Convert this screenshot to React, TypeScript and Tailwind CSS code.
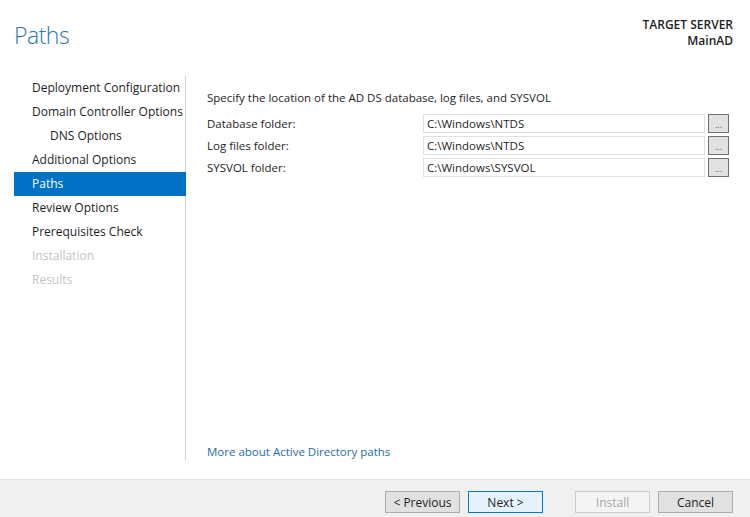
import React from 'react'

const navItems = [
  { label: 'Deployment Configuration', state: 'done' },
  { label: 'Domain Controller Options', state: 'done' },
  { label: 'DNS Options', state: 'done', indent: true },
  { label: 'Additional Options', state: 'done' },
  { label: 'Paths', state: 'active' },
  { label: 'Review Options', state: 'done' },
  { label: 'Prerequisites Check', state: 'done' },
  { label: 'Installation', state: 'disabled' },
  { label: 'Results', state: 'disabled' },
]

const folders = [
  { label: 'Database folder:', value: 'C:\\Windows\\NTDS' },
  { label: 'Log files folder:', value: 'C:\\Windows\\NTDS' },
  { label: 'SYSVOL folder:', value: 'C:\\Windows\\SYSVOL' },
]

export default function App() {
  return (
    <div
      className="flex h-[517px] w-[750px] flex-col overflow-hidden bg-white text-[12px] text-[#1e1e1e]"
      style={{ fontFamily: '"Open Sans", "Noto Sans", sans-serif' }}
    >
      {/* Header */}
      <div className="flex h-[76px] shrink-0 justify-between">
        <div className="pl-[14px] pt-[17px] text-[23px] font-light leading-[36px] tracking-[-0.5px] text-[#2a78ad]">
          Paths
        </div>
        <div className="pr-[17px] pt-[17px] text-right text-[12px] font-semibold leading-[16px] text-[#1e1e1e]">
          <div>TARGET SERVER</div>
          <div>MainAD</div>
        </div>
      </div>

      {/* Body */}
      <div className="flex flex-1">
        <div className="mb-[19px] ml-[14px] w-[172px] border-r border-[#d4d4d4]">
          {navItems.map((item) => (
            <div
              key={item.label}
              className={`flex h-[24px] items-center whitespace-nowrap ${
                item.indent ? 'pl-[36px]' : 'pl-[18px]'
              } ${
                item.state === 'active'
                  ? 'mr-[-1px] bg-[#0072c6] text-white'
                  : item.state === 'disabled'
                    ? 'text-[#c4c4c4]'
                    : 'text-[#1e1e1e]'
              }`}
            >
              {item.label}
            </div>
          ))}
        </div>

        <div className="flex flex-1 flex-col pb-[19px] pl-[21px] pr-[21px] pt-[13px] text-[11.5px]">
          <div className="leading-[18px]">
            Specify the location of the AD DS database, log files, and SYSVOL
          </div>
          <div className="mt-[7px] flex flex-col gap-[3px]">
            {folders.map((f) => (
              <div key={f.label} className="flex h-[19px] items-center">
                <div className="w-[216px]">{f.label}</div>
                <div className="flex h-[19px] w-[282px] items-center border border-[#e0e0e0] bg-white pl-[3px]">
                  {f.value}
                </div>
                <button className="ml-[3px] flex h-[19px] w-[21px] items-end justify-center border border-[#707070] bg-[#e1e1e1] pb-[3px] text-[9px] leading-none text-[#555]">
                  ...
                </button>
              </div>
            ))}
          </div>
          <div className="mt-auto leading-[16px] text-[#1e6ea7]">More about Active Directory paths</div>
        </div>
      </div>

      {/* Footer */}
      <div className="flex h-[38px] shrink-0 items-start border-t border-[#dfdfdf] bg-[#f0f0f0] pl-[385px] pt-[11px]">
        <button className="h-[22px] w-[75px] border border-[#adadad] bg-[#e1e1e1] pt-[1px] text-[12px] text-[#1e1e1e]">
          &lt; Previous
        </button>
        <button className="ml-[8px] h-[22px] w-[75px] border border-[#0078d7] bg-[#e5f1fb] pt-[1px] text-[12px] text-[#1e1e1e]">
          Next &gt;
        </button>
        <button className="ml-[32px] h-[22px] w-[75px] border border-[#cccccc] bg-[#f4f4f4] pt-[1px] text-[12px] text-[#a8a8a8]">
          Install
        </button>
        <button className="ml-[8px] h-[22px] w-[75px] border border-[#adadad] bg-[#e1e1e1] pt-[1px] text-[12px] text-[#1e1e1e]">
          Cancel
        </button>
      </div>
    </div>
  )
}
